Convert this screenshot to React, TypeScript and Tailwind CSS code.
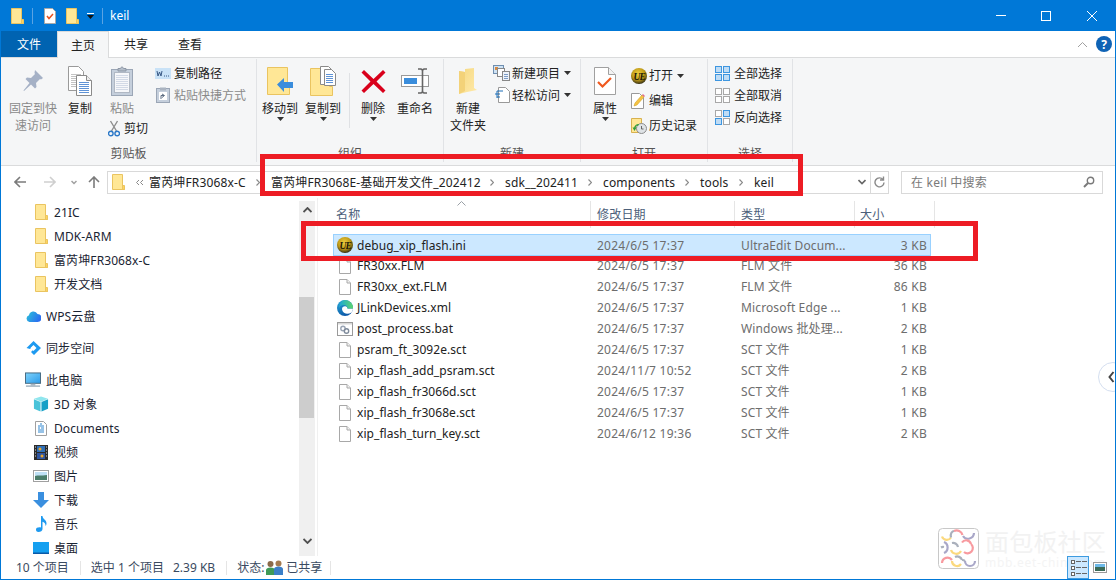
import React from "react";

const Page = ({ w = 12, h = 16 }: { w?: number; h?: number }) => (
  <svg width={w} height={h} viewBox="0 0 12 16" className="shrink-0">
    <path d="M.5.5h7.5l3.5 3.5v11.5h-11z" fill="#fff" stroke="#a8a8a8" />
    <path d="M8 .5v3.5h3.5" fill="#f2f2f2" stroke="#a8a8a8" />
  </svg>
);
const Folder = ({ w = 13, h = 16 }: { w?: number; h?: number }) => (
  <svg width={w} height={h} viewBox="0 0 13 16" className="shrink-0">
    <path d="M.5.5h10v12h2v3h-12z" fill="#ffe796" stroke="#eac460" />
    <path d="M10.5 11.5h2v4h-2z" fill="#ffd45e" stroke="#eac460" />
  </svg>
);
const UE = ({ s = 16 }: { s?: number }) => (
  <svg width={s} height={s} viewBox="0 0 16 16" className="shrink-0">
    <defs>
      <radialGradient id={`ue${s}`} cx="0.45" cy="0.35" r="0.65">
        <stop offset="0" stopColor="#f0d040" />
        <stop offset="0.6" stopColor="#bf9a18" />
        <stop offset="0.9" stopColor="#5a4c14" />
        <stop offset="1" stopColor="#2c2710" />
      </radialGradient>
    </defs>
    <circle cx="8" cy="8" r="8" fill={`url(#ue${s})`} />
    <text x="2.6" y="11.500" fontSize="9.500" fontWeight="700" fontStyle="italic" letterSpacing="-1" fontFamily="Liberation Serif, serif" fill="#1c1808">UE</text>
  </svg>
);
const Edge = () => (
  <svg width="16" height="16" viewBox="0 0 16 16" className="shrink-0">
    <defs>
      <linearGradient id="eg" x1="0" y1="0" x2="0.600" y2="1">
        <stop offset="0" stopColor="#2aa8d8" />
        <stop offset="1" stopColor="#0a55a6" />
      </linearGradient>
      <linearGradient id="eg2" x1="0" y1="0.500" x2="1" y2="0.500">
        <stop offset="0" stopColor="#1ba7d8" />
        <stop offset="1" stopColor="#5ed66c" />
      </linearGradient>
    </defs>
    <circle cx="8" cy="8" r="8" fill="url(#eg)" />
    <path d="M5 9c0-2 2-3 4-2.500 1 .3 1.500 1 1.500 2H16c-.2 1.700-.7 2.800-1.500 4-2.500 1.500-5.500 1.500-7 .5C6 12 5 10.500 5 9z" fill="#fff" />
    <path d="M8 0a8 8 0 0 1 8 8.500h-5.500c0-2-1.500-3.500-3.500-3.500-3 0-4.500 1.500-5 3.500C2 3.500 4.500 0 8 0z" fill="url(#eg2)" />
  </svg>
);
const Bat = () => (
  <svg width="16" height="14" viewBox="0 0 16 14" className="shrink-0">
    <rect x=".5" y=".5" width="15" height="13" fill="#fff" stroke="#9a9a9a" />
    <rect x="1" y="1" width="14" height="1.500" fill="#d8d8d8" />
    <circle cx="6" cy="6.500" r="2.200" fill="none" stroke="#9aa5b5" strokeWidth="1.400" />
    <circle cx="9.500" cy="9" r="2.200" fill="none" stroke="#7f8b9b" strokeWidth="1.400" />
  </svg>
);
const Chev = ({ d = "M1 1l3 3-3 3", c = "#8a8a8a", w = 5, h = 8, sw = 1.5 }: { d?: string; c?: string; w?: number; h?: number; sw?: number }) => (
  <svg width={w} height={h} viewBox={`0 0 ${w} ${h}`} className="shrink-0">
    <path d={d} fill="none" stroke={c} strokeWidth={sw} />
  </svg>
);
const Caret = () => (
  <svg width="7" height="4" viewBox="0 0 7 4" className="shrink-0"><path d="M0 0h7l-3.500 4z" fill="#333" /></svg>
);

const IconPin = () => (
  <svg width="22" height="24" viewBox="0 0 22 24">
    <path d="M13 1l8 8-2 1.500-1-.5-4 4 .5 4-1.500 1.500-4-4L2 22l-.5-.5 6-7.500-4-4L5 8.500l4 .5 4-4-.5-1z" fill="#a5b1c6" />
  </svg>
);
const Lines = ({ x, y, w, n, gap = 2, c = "#5f93d6" }: { x: number; y: number; w: number; n: number; gap?: number; c?: string }) => (
  <>
    {Array.from({ length: n }).map((_, i) => (
      <path key={i} d={`M${x} ${y + i * gap + 0.5}h${w}`} stroke={c} />
    ))}
  </>
);
const IconCopy = () => (
  <svg width="24" height="30" viewBox="0 0 24 30">
    <path d="M.5.5h10l5 5v19H.5z" fill="#fff" stroke="#9a9a9a" />
    <Lines x={3} y={8} w={10} n={7} c="#c3c3c3" />
    <path d="M8.500 9.500h10l5 5v15h-15z" fill="#fff" stroke="#8a8a8a" />
    <path d="M18.500 9.500v5h5" fill="#eee" stroke="#8a8a8a" />
    <Lines x={11} y={16} w={10} n={6} />
  </svg>
);
const IconPaste = () => (
  <svg width="22" height="30" viewBox="0 0 22 30">
    <rect x=".5" y="3.500" width="21" height="26" fill="#c5cfdc" stroke="#9ba6b6" />
    <rect x="3.500" y="6.500" width="15" height="20" fill="#f6f7fa" stroke="#b0b8c4" />
    <Lines x={5} y={9} w={12} n={8} gap={2} c="#d2d9e6" />
    <path d="M7 5V2.500h2.500C10 .5 12 .5 12.500 2.500H15V5z" fill="#b4bdc9" stroke="#8d97a5" />
  </svg>
);
const IconCopyPath = () => (
  <svg width="16" height="11" viewBox="0 0 16 11">
    <rect width="16" height="11" fill="#c9e2f7" />
    <path d="M2 3l1 5 1.500-4L6 8l1-5" fill="none" stroke="#3a5a86" />
    <path d="M9 8h1M11 8h1M13 8h1" stroke="#3a5a86" />
  </svg>
);
const IconShortcut = () => (
  <svg width="14" height="16" viewBox="0 0 14 16">
    <rect x=".5" y="1.500" width="13" height="14" fill="#c5cfdc" stroke="#9ba6b6" />
    <rect x="4" y=".5" width="6" height="3" fill="#aab3c0" />
    <rect x="3" y="5" width="8" height="8" fill="#fff" />
    <path d="M5 12V8.500h3M6 7l2.500 1.500L6 10.500" fill="none" stroke="#5d6d82" />
  </svg>
);
const IconCut = () => (
  <svg width="12" height="17" viewBox="0 0 12 17">
    <path d="M2.500 1l6 10M9.500 1l-6 10" stroke="#8d8d8d" strokeWidth="1.400" fill="none" />
    <circle cx="2.800" cy="13.500" r="2.300" fill="none" stroke="#2b78c8" strokeWidth="1.400" />
    <circle cx="9.200" cy="13.500" r="2.300" fill="none" stroke="#2b78c8" strokeWidth="1.400" />
  </svg>
);
const IconMove = () => (
  <svg width="27" height="28" viewBox="0 0 27 28">
    <path d="M.5.500h20v19h2v8H.5z" fill="#ffe796" stroke="#eac460" />
    <path d="M10 17.500L17 11v4h9v6h-9v4z" fill="#3a8ddc" />
  </svg>
);
const IconCopyTo = () => (
  <svg width="26" height="30" viewBox="0 0 26 30">
    <path d="M.5 2.500h19v18h3v9H.5z" fill="#ffe796" stroke="#eac460" />
    <path d="M10.500.5h8l4 4v14h-12z" fill="#fff" stroke="#8a8a8a" />
    <path d="M14.500 3.500h7l4 4v12h-11z" fill="#fff" stroke="#8a8a8a" />
    <Lines x={16} y={8} w={7} n={5} />
  </svg>
);
const IconDelete = () => (
  <svg width="25" height="25" viewBox="0 0 25 25">
    <path d="M3 1l9.500 9L22 1l2.500 2.500-9 9 9 9L22 24l-9.500-9L3 24 .5 21.500l9-9-9-9z" fill="#d9001b" />
  </svg>
);
const IconRename = () => (
  <svg width="28" height="26" viewBox="0 0 28 26">
    <rect x=".5" y="7.500" width="27" height="11" fill="#fff" stroke="#9a9a9a" />
    <rect x="3" y="10" width="13" height="6" fill="#3a8ddc" />
    <path d="M17 1h3l1.500 1L23 1h3M21.500 2v22M17 25h3l1.500-1 1.500 1h3" fill="none" stroke="#666" strokeWidth="1.600" />
  </svg>
);
const IconNewFolder = () => (
  <svg width="20" height="28" viewBox="0 0 20 28">
    <defs>
      <linearGradient id="nf" x1="0" y1="0" x2="1" y2="1">
        <stop offset="0" stopColor="#f5d983" />
        <stop offset="1" stopColor="#ffe9a8" />
      </linearGradient>
    </defs>
    <path d="M1 4l6 1V2l9-1v20l3 2-10 2-8 2z" fill="url(#nf)" />
    <path d="M1 4l6 1v19l-6 3z" fill="#f3d279" />
  </svg>
);
const IconNewItem = () => (
  <svg width="17" height="16" viewBox="0 0 17 16">
    <rect x=".5" y=".5" width="10" height="8" fill="#cfe3f5" stroke="#6f8fb0" />
    <rect x="2" y="2" width="3" height="3" fill="#d9893f" />
    <rect x="4.500" y="3.500" width="7" height="8" fill="#fff" stroke="#888" />
    <rect x="9.500" y="6.500" width="7" height="9" fill="#eef3fa" stroke="#888" />
    <Lines x={11} y={9} w={4} n={3} c="#7d9cc6" />
  </svg>
);
const IconEasy = () => (
  <svg width="16" height="16" viewBox="0 0 16 16">
    <path d="M4.500.5h7l4 4v11h-11z" fill="#fff" stroke="#999" />
    <path d="M3 4h6M1 7h5M3 10h3" stroke="#1c6fb8" strokeWidth="1.200" />
    <path d="M3 4v7" stroke="#1c6fb8" />
  </svg>
);
const IconProps = () => (
  <svg width="22" height="28" viewBox="0 0 22 28">
    <path d="M.5.5h14l7 7v20H.5z" fill="#fff" stroke="#a0a0a0" />
    <path d="M14.500.5v7h7" fill="#f2f2f2" stroke="#a0a0a0" />
    <path d="M4 15l4.500 4.500L17 11" fill="none" stroke="#f0591f" strokeWidth="2.200" />
  </svg>
);
const IconEdit = () => (
  <svg width="15" height="16" viewBox="0 0 15 16">
    <path d="M.5.5h8l4 4v11H.5z" fill="#fff" stroke="#999" />
    <path d="M3 13l1-3 7-8 2 2-7 8z" fill="#f6c343" stroke="#c99a1e" strokeWidth=".5" />
    <path d="M11 2l1-1 2 2-1 1z" fill="#e26a8c" />
  </svg>
);
const IconHistory = () => (
  <svg width="16" height="16" viewBox="0 0 16 16">
    <path d="M.5.5h10v14H.5z" fill="#ffe796" stroke="#d8b14f" />
    <circle cx="10.500" cy="10.500" r="5" fill="#dfe3e6" stroke="#8c8c8c" />
    <path d="M10.500 8v3h2" fill="none" stroke="#666" />
    <path d="M3 10.500A5 5 0 0 1 8 6l-1 2-1-.5c-1 .6-1.500 1.500-1.500 3z" fill="#2f9b3a" />
    <path d="M1.500 9.500h4L3.500 13z" fill="#2f9b3a" />
  </svg>
);
const Grid4 = ({ mode }: { mode: "all" | "none" | "inv" }) => {
  const blue = (
    <span className="block w-[7px] h-[7px] bg-[#bfdcf5] border border-[#3d96e0]" />
  );
  const grey = <span className="block w-[7px] h-[7px] bg-white border border-[#a8a8a8]" />;
  const cell = (on: boolean, k: number) => <span key={k}>{on ? blue : grey}</span>;
  const pattern = mode === "all" ? [1, 1, 1, 1] : mode === "none" ? [0, 0, 0, 0] : [0, 1, 1, 0];
  return (
    <span className="grid grid-cols-2 gap-[1px] w-[15px] shrink-0">
      {pattern.map((p, i) => cell(!!p, i))}
    </span>
  );
};

const ICloud = () => (
  <svg width="15" height="11" viewBox="0 0 15 11">
    <defs>
      <linearGradient id="cl" x1="0" y1="0" x2="1" y2="0.400">
        <stop offset="0" stopColor="#2bc4d8" />
        <stop offset="1" stopColor="#2a6ff0" />
      </linearGradient>
    </defs>
    <path d="M3.500 11a3.500 3.500 0 0 1-.5-6.800A4.500 4.500 0 0 1 11.500 3 4 4 0 0 1 11.500 11z" fill="url(#cl)" />
  </svg>
);
const ISync = () => (
  <svg width="15" height="14" viewBox="0 0 15 14">
    <path d="M7.500 0l7.500 7-7 7-3-3 4-4-2-2-3 3L.5 7z" fill="#1e9af0" />
    <path d="M4.500 7l3-3 3 3-3 3z" fill="#fff" />
  </svg>
);
const IPC = () => (
  <svg width="17" height="16" viewBox="0 0 17 16">
    <defs>
      <linearGradient id="pc" x1="0" y1="0" x2="1" y2="1">
        <stop offset="0" stopColor="#7fd2fa" />
        <stop offset="1" stopColor="#2b9bea" />
      </linearGradient>
    </defs>
    <rect x=".5" y=".5" width="16" height="11" fill="url(#pc)" stroke="#43667e" />
    <path d="M6 12h5v2H6z" fill="#a9b7c3" />
    <path d="M1 14.500h15" stroke="#9fb0bd" strokeWidth="1.500" />
  </svg>
);
const I3D = () => (
  <svg width="17" height="16" viewBox="0 0 17 16">
    <path d="M8.500 0L16 2.500 8.500 5.500 1 2.500z" fill="#8fe6ee" />
    <path d="M1 3l7 3v10l-7-3z" fill="#49c3d9" />
    <path d="M16 3L9 6v10l7-3z" fill="#18a0c7" />
  </svg>
);
const IDoc = () => (
  <svg width="12" height="15" viewBox="0 0 12 15">
    <path d="M.5.5h8l3 3v11H.5z" fill="#fff" stroke="#a0a0a0" />
    <path d="M5 3h2M3 5h6M3 7h2M6 7h3M3 9h6M3 11h6" stroke="#2f86cf" />
  </svg>
);
const IVideo = () => (
  <svg width="14" height="15" viewBox="0 0 14 15">
    <rect width="14" height="15" fill="#2b2b2b" />
    <rect x="3" y="1" width="8" height="6" fill="#2f6fb8" />
    <rect x="3" y="8" width="8" height="6" fill="#2f55a0" />
    <circle cx="6" cy="4" r="1.500" fill="#e8a72e" />
    <circle cx="8" cy="11" r="1.500" fill="#e8a72e" />
    <path d="M1 2h1M1 5h1M1 8h1M1 11h1M12 2h1M12 5h1M12 8h1M12 11h1" stroke="#ddd" />
  </svg>
);
const IPic = () => (
  <svg width="16" height="12" viewBox="0 0 16 12">
    <rect x=".5" y=".5" width="15" height="11" fill="#fff" stroke="#a0a0a0" />
    <rect x="2" y="2" width="12" height="4" fill="#bfe0f5" />
    <path d="M2 6c3-1 6 0 12-1v5H2z" fill="#4b7d6a" />
  </svg>
);
const IDown = () => (
  <svg width="16" height="16" viewBox="0 0 16 16">
    <path d="M5 0h6v8h5l-8 8-8-8h5z" fill="#3a8fdf" />
  </svg>
);
const IMusic = () => (
  <svg width="11" height="16" viewBox="0 0 11 16">
    <path d="M5 0h1.500c0 3 4 3.500 4 7.500 0 1-.5 2-1 2.500.3-2.500-1.500-3.800-3-4.200V13c0 2-2 3-4 3S0 15 0 13.500 2 11 5 11.500z" fill="#1e9af0" />
  </svg>
);
const IDesk = () => (
  <svg width="16" height="12" viewBox="0 0 16 12">
    <rect width="16" height="12" fill="#15a0f0" />
    <rect y="10.500" width="16" height="1.500" fill="#0a5aa8" />
  </svg>
);
const IShare = () => (
  <svg width="17" height="16" viewBox="0 0 17 16">
    <circle cx="4.500" cy="4" r="3" fill="#8a6a4a" />
    <path d="M0 15V10c0-1.500 2-2.500 4.500-2.500S9 8.500 9 10v5z" fill="#3f9a58" />
    <circle cx="12.500" cy="3.500" r="3" fill="#a37a50" />
    <path d="M8 15V9c0-1.500 2-2.500 4.500-2.500S17 7.500 17 9v6z" fill="#3a7fc8" />
  </svg>
);

const WatermarkLogo = () => {
  const y = "#fbd97f";
  const r = "#f89a9f";
  const p = "#a9a7c8";
  const g = "#aab0bc";
  const arcs: [string, string][] = [
    ["M4 8.500a5 5 0 0 0 9 1", y],
    ["M13 9.500c-1-4 1-6.500 3.500-6.500", g],
    ["M16 3a6 6 0 0 1 8.500 4", r],
    ["M25 8a6 6 0 0 0 11-3", p],
    ["M6 14a6 6 0 0 1 0 11", p],
    ["M3 19.500a4 4 0 0 1 3-.5", g],
    ["M14 15a5 5 0 0 1 6 4", g],
    ["M13 22a5.500 5.500 0 0 0 10 1", y],
    ["M24 14.500a5 5 0 0 1 9 1.500", r],
    ["M33 16a5 5 0 0 1-7 8", r],
    ["M4 35a5.500 5.500 0 0 1 10-3", r],
    ["M14 33a5 5 0 0 0 9 3", y],
    ["M17 29a5 5 0 0 1 7 3", g],
    ["M27 33a5 5 0 0 0 10 0", p],
    ["M24 32a4 4 0 0 1 3 1", g],
  ];
  return (
    <svg width="41" height="41" viewBox="0 0 41 41" className="shrink-0">
      <rect x=".5" y=".5" width="40" height="40" rx="4" fill="#fff" stroke="#c8c8c8" />
      {arcs.map(([d, c], i) => (
        <path key={i} d={d} fill="none" stroke={c} strokeWidth="2.200" />
      ))}
    </svg>
  );
};

const Large = ({ w, icon, lines, caret, muted }: { w: number; icon: React.ReactNode; lines: string[]; caret?: boolean; muted?: boolean }) => (
  <div className="flex flex-col items-center shrink-0" style={{ width: w }}>
    <div className="h-[38px] flex items-center justify-center">{icon}</div>
    {lines.map((l) => (
      <div key={l} className={`leading-[17px] whitespace-nowrap ${muted ? "text-[#8a8a8a]" : ""}`}>{l}</div>
    ))}
    {caret && <div className="mt-[0px]"><Caret /></div>}
  </div>
);
const Small = ({ icon, text, caret, muted, h = 22, gap = 3, iconW = 16 }: { icon: React.ReactNode; text: string; caret?: boolean; muted?: boolean; h?: number; gap?: number; iconW?: number }) => (
  <div className="flex items-center whitespace-nowrap" style={{ height: h }}>
    <span className="flex justify-center shrink-0" style={{ width: iconW, marginRight: gap }}>{icon}</span>
    <span className={muted ? "text-[#8a8a8a]" : ""}>{text}</span>
    {caret && <span className="ml-[4px]"><Caret /></span>}
  </div>
);
const Group = ({ w, label, children }: { w: number; label: string; children: React.ReactNode }) => (
  <div className="flex flex-col shrink-0 border-r border-[#e1e3e6] h-[103px]" style={{ width: w }}>
    <div className="flex flex-1 pt-[3px] min-h-0">{children}</div>
    <div className="text-center leading-[17px] text-[#555] h-[17px]">{label}</div>
  </div>
);

const crumbs: [string, number][] = [
  ["富芮坤FR3068x-C", 122],
  ["富芮坤FR3068E-基础开发文件_202412", 234],
  ["sdk__202411", 98],
  ["components", 97],
  ["tools", 54],
];

const files: [React.ReactNode, string, string, string, string][] = [
  [<UE />, "debug_xip_flash.ini", "2024/6/5 17:37", "UltraEdit Docum...", "3 KB"],
  [<Page />, "FR30xx.FLM", "2024/6/5 17:37", "FLM 文件", "36 KB"],
  [<Page />, "FR30xx_ext.FLM", "2024/6/5 17:37", "FLM 文件", "86 KB"],
  [<Edge />, "JLinkDevices.xml", "2024/6/5 17:37", "Microsoft Edge ...", "1 KB"],
  [<Bat />, "post_process.bat", "2024/6/5 17:37", "Windows 批处理...", "2 KB"],
  [<Page />, "psram_ft_3092e.sct", "2024/6/5 17:37", "SCT 文件", "1 KB"],
  [<Page />, "xip_flash_add_psram.sct", "2024/11/7 10:52", "SCT 文件", "2 KB"],
  [<Page />, "xip_flash_fr3066d.sct", "2024/6/5 17:37", "SCT 文件", "1 KB"],
  [<Page />, "xip_flash_fr3068e.sct", "2024/6/5 17:37", "SCT 文件", "1 KB"],
  [<Page />, "xip_flash_turn_key.sct", "2024/6/12 19:36", "SCT 文件", "2 KB"],
];

const NavRow = ({ icon, text, indent, mt = 0 }: { icon: React.ReactNode; text: string; indent: number; mt?: number }) => (
  <div className="flex items-center h-[24px] shrink-0 whitespace-nowrap" style={{ paddingLeft: indent, marginTop: mt }}>
    <span className="flex justify-center shrink-0 w-[16px] mr-[5px]">{icon}</span>
    <span className="text-[#1a2433]">{text}</span>
  </div>
);

const Vsep = () => <span className="block w-[1px] h-[16px] bg-[#5aa3e3] shrink-0" />;

export default function App() {
  return (
    <div className="relative w-[1116px] h-[580px] overflow-hidden bg-white border border-t-0 border-[#0078d7] flex flex-col text-[12px] leading-[17px] text-[#222] font-['Noto_Sans','Noto_Sans_CJK_SC',sans-serif]">
      {/* title bar */}
      <div className="h-[31px] shrink-0 bg-[#0078d7] flex items-center text-white -mx-[1px] pl-[11px]">
        <Folder />
        <span className="ml-[8px] mr-[11px]"><Vsep /></span>
        <span className="flex items-center">
          <svg width="12" height="16" viewBox="0 0 12 16"><path d="M.5.5h8l3 3v12H.5z" fill="#fff" stroke="#aaa" /><path d="M3 8l2 2.500L9 6" fill="none" stroke="#e8501e" strokeWidth="1.500" /></svg>
        </span>
        <span className="ml-[10px]"><Folder /></span>
        <span className="ml-[8px] flex flex-col items-center gap-[1px]">
          <span className="block w-[7px] h-[1px] bg-white" />
          <svg width="7" height="4" viewBox="0 0 7 4"><path d="M0 0h7l-3.500 4z" fill="#111" /></svg>
        </span>
        <span className="ml-[8px] mr-[7px]"><Vsep /></span>
        <span>keil</span>
        <div className="flex-1" />
        <svg width="10" height="1" className="mr-[35px]"><rect width="10" height="1" fill="#fff" /></svg>
        <svg width="10" height="10" className="mr-[36px]"><rect x=".5" y=".5" width="9" height="9" fill="none" stroke="#fff" /></svg>
        <svg width="10" height="10" className="mr-[19px]"><path d="M0 0l10 10M10 0L0 10" stroke="#fff" /></svg>
      </div>

      {/* tabs */}
      <div className="h-[27px] shrink-0 flex items-start border-b border-[#dadbdc] relative">
        <div className="w-[56px] h-[26px] bg-[#0063b1] text-white flex items-center justify-center">文件</div>
        <div className="w-[52px] h-[27px] bg-[#f5f6f7] border border-b-0 border-[#dadbdc] flex items-center justify-center">主页</div>
        <div className="w-[54px] h-[26px] flex items-center justify-center">共享</div>
        <div className="w-[54px] h-[26px] flex items-center justify-center">查看</div>
        <div className="flex-1" />
        <span className="mr-[8px] mt-[10px]"><Chev d="M1 6l4.500-4.500L10 6" c="#a0a0a0" w={11} h={7} sw={1} /></span>
        <span className="mr-[3px] mt-[5px] w-[16px] h-[16px] rounded-full bg-[#0f63b5] text-white font-bold flex items-center justify-center text-[12px]">?</span>
      </div>

      {/* ribbon */}
      <div className="h-[108px] shrink-0 bg-[#f5f6f7] border-b border-[#dadbdc] flex items-start pt-[1px]">
        <Group w={256} label="剪贴板">
          <div className="ml-[2px]"><Large w={60} icon={<IconPin />} lines={["固定到快", "速访问"]} muted /></div>
          <Large w={34} icon={<IconCopy />} lines={["复制"]} />
          <div className="w-[50px] shrink-0 flex flex-col">
            <Large w={50} icon={<IconPaste />} lines={["粘贴"]} muted />
            <div className="pl-[11px] mt-[2px]"><Small h={18} iconW={12} gap={4} icon={<IconCut />} text="剪切" /></div>
          </div>
          <div className="ml-[8px] flex flex-col">
            <Small icon={<IconCopyPath />} text="复制路径" />
            <Small icon={<IconShortcut />} text="粘贴快捷方式" muted />
          </div>
        </Group>
        <Group w={187} label="组织">
          <div className="ml-[1px] flex">
            <Large w={44} icon={<IconMove />} lines={["移动到"]} caret />
            <Large w={42} icon={<IconCopyTo />} lines={["复制到"]} caret />
            <div className="ml-[5px] mt-[11px] w-[1px] h-[55px] bg-[#dfe1e4]" />
            <Large w={46} icon={<IconDelete />} lines={["删除"]} caret />
            <Large w={38} icon={<IconRename />} lines={["重命名"]} />
          </div>
        </Group>
        <Group w={137} label="新建">
          <div className="ml-[2px]"><Large w={44} icon={<IconNewFolder />} lines={["新建", "文件夹"]} /></div>
          <div className="ml-[3px] flex flex-col">
            <Small iconW={17} gap={2} icon={<IconNewItem />} text="新建项目" caret />
            <Small iconW={17} gap={2} icon={<IconEasy />} text="轻松访问" caret />
          </div>
        </Group>
        <Group w={127} label="打开">
          <Large w={48} icon={<IconProps />} lines={["属性"]} caret />
          <div className="ml-[1px] flex flex-col pt-[1px]">
            <Small h={25} iconW={17} gap={2} icon={<UE />} text="打开" caret />
            <Small h={25} iconW={17} gap={2} icon={<IconEdit />} text="编辑" />
            <Small h={25} iconW={17} gap={2} icon={<IconHistory />} text="历史记录" />
          </div>
        </Group>
        <Group w={85} label="选择">
          <div className="ml-[7px] flex flex-col">
            <Small iconW={15} gap={4} icon={<Grid4 mode="all" />} text="全部选择" />
            <Small iconW={15} gap={4} icon={<Grid4 mode="none" />} text="全部取消" />
            <Small iconW={15} gap={4} icon={<Grid4 mode="inv" />} text="反向选择" />
          </div>
        </Group>
      </div>

      {/* address row */}
      <div className="h-[32px] shrink-0 flex items-center">
        <svg width="12" height="12" viewBox="0 0 12 12" className="ml-[13px]"><path d="M6 1L1 6l5 5M1 6h11" fill="none" stroke="#7b7b7b" strokeWidth="1.600" /></svg>
        <svg width="12" height="12" viewBox="0 0 12 12" className="ml-[18px]"><path d="M6 1l5 5-5 5M11 6H0" fill="none" stroke="#cfcfcf" strokeWidth="1.600" /></svg>
        <span className="ml-[15px]"><Chev d="M.5 1l2.500 2.500L5.500 1" c="#a0a0a0" w={6} h={5} /></span>
        <svg width="12" height="12" viewBox="0 0 12 12" className="ml-[11px]"><path d="M1 6l5-5 5 5M6 1v11" fill="none" stroke="#7b7b7b" strokeWidth="1.600" /></svg>
        <div className="ml-[7px] w-[782px] h-[23px] border border-[#d9d9d9] flex items-center pl-[4px]">
          <Folder />
          <span className="ml-[10px] w-[14px] flex items-center"><Chev d="M4 1L1.500 3.500 4 6M8 1L5.500 3.500 8 6" w={9} h={7} sw={1} /></span>
          {crumbs.map(([t, w]) => (
            <div key={t} className="flex items-center justify-between pr-[11px] shrink-0 whitespace-nowrap tracking-[0.15px]" style={{ width: w }}>
              <span>{t}</span>
              <Chev w={4} h={7} d="M.5 .5l3 3-3 3" sw={1.200} />
            </div>
          ))}
          <span className="tracking-[0.15px]">keil</span>
          <div className="flex-1" />
          <Chev d="M.5 1l3.500 3.500L7.500 1" c="#666" w={8} h={6} sw={1.600} />
          <span className="ml-[4px] w-[1px] h-[21px] bg-[#d9d9d9]" />
          <svg width="11" height="12" viewBox="0 0 11 12" className="mx-[3px]"><path d="M9 3.500a4.500 4.500 0 1 0 1 3M9.500 .5v3.500H6" fill="none" stroke="#8a8a8a" strokeWidth="1.400" /></svg>
        </div>
        <div className="ml-[12px] w-[202px] h-[23px] border border-[#d9d9d9] flex items-center pl-[9px] pr-[7px] text-[#7a7a7a] tracking-[0.25px]">
          <span>在 keil 中搜索</span>
          <div className="flex-1" />
          <svg width="12" height="12" viewBox="0 0 12 12"><circle cx="7.500" cy="4.500" r="3.200" fill="none" stroke="#7a7a7a" strokeWidth="1.400" /><path d="M5 7l-4 4" stroke="#7a7a7a" strokeWidth="2" /></svg>
        </div>
      </div>

      {/* main */}
      <div className="flex-1 min-h-0 flex">
        <div className="w-[298px] shrink-0 overflow-hidden flex flex-col pt-[2px] tracking-[0.1px]">
          <NavRow indent={32} icon={<Folder />} text="21IC" />
          <NavRow indent={32} icon={<Folder />} text="MDK-ARM" />
          <NavRow indent={32} icon={<Folder />} text="富芮坤FR3068x-C" />
          <NavRow indent={32} icon={<Folder />} text="开发文档" />
          <NavRow mt={8} indent={24} icon={<ICloud />} text="WPS云盘" />
          <NavRow mt={8} indent={24} icon={<ISync />} text="同步空间" />
          <NavRow mt={8} indent={24} icon={<IPC />} text="此电脑" />
          <NavRow indent={32} icon={<I3D />} text="3D 对象" />
          <NavRow indent={32} icon={<IDoc />} text="Documents" />
          <NavRow indent={32} icon={<IVideo />} text="视频" />
          <NavRow indent={32} icon={<IPic />} text="图片" />
          <NavRow indent={32} icon={<IDown />} text="下载" />
          <NavRow indent={32} icon={<IMusic />} text="音乐" />
          <NavRow indent={32} icon={<IDesk />} text="桌面" />
        </div>
        {/* scrollbar */}
        <div className="w-[16px] shrink-0 mt-[3px] bg-[#f0f0f0] flex flex-col items-center">
          <div className="h-[18px] pt-[6px] flex justify-center"><Chev d="M.5 5L4.500 1 8.500 5" c="#505050" w={9} h={6} sw={1.800} /></div>
          <div className="h-[78px]" />
          <div className="h-[121px] w-[15px] self-start bg-[#cdcdcd]" />
          <div className="flex-1" />
          <div className="h-[18px] flex justify-center"><Chev d="M.5 1L4.500 5 8.500 1" c="#505050" w={9} h={6} sw={1.800} /></div>
        </div>
        <div className="w-[1px] ml-[2px] bg-[#f0f0f0] shrink-0" />
        {/* file pane */}
        <div className="flex-1 min-w-0 pt-[3px] relative">
          <div className="h-[27px] flex items-center pl-[18px] text-[#4c607a] tracking-[0.2px]">
            <div className="w-[254px] h-full flex items-center">名称</div>
            <div className="w-[144px] h-full flex items-center pl-[6px] border-l border-[#e5e5e5]">修改日期</div>
            <div className="w-[120px] h-full flex items-center pl-[6px] border-l border-[#e5e5e5]">类型</div>
            <div className="w-[81px] h-full flex items-center pl-[5px] border-l border-[#e5e5e5] border-r">大小</div>
          </div>
          <span className="absolute left-[139px] top-[3px]"><Chev d="M.5 4.500L4.500 .5 8.500 4.500" c="#9aa0a6" w={9} h={5} sw={1} /></span>
          <div className="mt-[6px] ml-[15px] w-[598px] flex flex-col">
            {files.map(([icon, name, date, type, size], i) => (
              <div
                key={name}
                className={`h-[21px] first:h-[22px] first:-mb-[1px] shrink-0 grid grid-cols-[263px_144px_113px_73px] items-center border whitespace-nowrap ${i === 0 ? "bg-[#cce8ff] border-[#99d1ff] relative" : "border-transparent"}`}
              >
                <div className="flex items-center tracking-[0.06px]">
                  <span className="w-[23px] pr-[1px] flex justify-center shrink-0">{icon}</span>
                  <span>{name}</span>
                </div>
                <div className="text-[#6d6d6d] tracking-[0.25px]">{date}</div>
                <div className="text-[#6d6d6d] tracking-[0.13px]">{type}</div>
                <div className="text-[#6d6d6d] text-right tracking-[0.25px]">{size}</div>
              </div>
            ))}
          </div>
        </div>
      </div>

      {/* status */}
      <div className="h-[23px] shrink-0 flex items-center text-[#3a4a60] whitespace-nowrap">
        <span className="ml-[15px]">10 个项目</span>
        <span className="ml-[11px] w-[1px] h-[14px] bg-[#e5e5e5]" />
        <span className="ml-[10px]">选中 1 个项目</span>
        <span className="ml-[9px]">2.39 KB</span>
        <span className="ml-[11px] w-[1px] h-[14px] bg-[#e5e5e5]" />
        <span className="ml-[10px]">状态:</span>
        <span className="ml-[2px]"><IShare /></span>
        <span className="ml-[3px]">已共享</span>
        <span className="ml-[8px] w-[1px] h-[14px] bg-[#e5e5e5]" />
        <div className="flex-1" />
        <div className="w-[22px] h-[23px] bg-[#cce8ff] border border-[#3d9be0] flex flex-col justify-center gap-[2px] pl-[3px] relative z-10">
          {[0, 1, 2].map((i) => (
            <div key={i} className="flex items-center gap-[1px]">
              <span className="block w-[4px] h-[4px] bg-white border border-[#666]" />
              <span className="block w-[5px] h-[1px] bg-[#666]" />
              <span className="block w-[5px] h-[1px] bg-[#666]" />
            </div>
          ))}
        </div>
        <span className="ml-[4px] mr-[8px] relative z-10">
          <svg width="14" height="11" viewBox="0 0 14 11"><rect x=".5" y=".5" width="13" height="10" fill="#fff" stroke="#9a9a9a" /><rect x="2" y="2" width="10" height="3" fill="#6db9e8" /><rect x="2" y="5" width="10" height="4" fill="#3b6b58" /></svg>
        </span>
      </div>

      {/* watermark */}
      <div className="absolute left-[937px] top-[528px] flex items-start pointer-events-none">
        <WatermarkLogo />
        <div className="ml-[6px] flex flex-col">
          <span className="text-[24px] leading-[28px] text-[#f2f2f2] tracking-[0.2px]">面包板社区</span>
          <span className="text-[12px] leading-[14px] text-[#f4f4f4] tracking-[0.7px]">mbb.eet-china.com</span>
        </div>
      </div>

      {/* side handle */}
      <div className="absolute left-[1097px] top-[362px] w-[30px] h-[30px] rounded-full bg-white border border-[#d5dff0] flex items-center pl-[9px]">
        <Chev d="M5.500 1L1.500 6l4 5" c="#444" w={7} h={12} sw={2} />
      </div>

      {/* red annotation frames */}
      <div className="absolute left-[259px] top-[154px] w-[543px] h-[42px] border-[5px] border-[#ed1c24] pointer-events-none" />
      <div className="absolute left-[300px] top-[221px] w-[677px] h-[40px] border-[5px] border-[#ed1c24] pointer-events-none" />
    </div>
  );
}
